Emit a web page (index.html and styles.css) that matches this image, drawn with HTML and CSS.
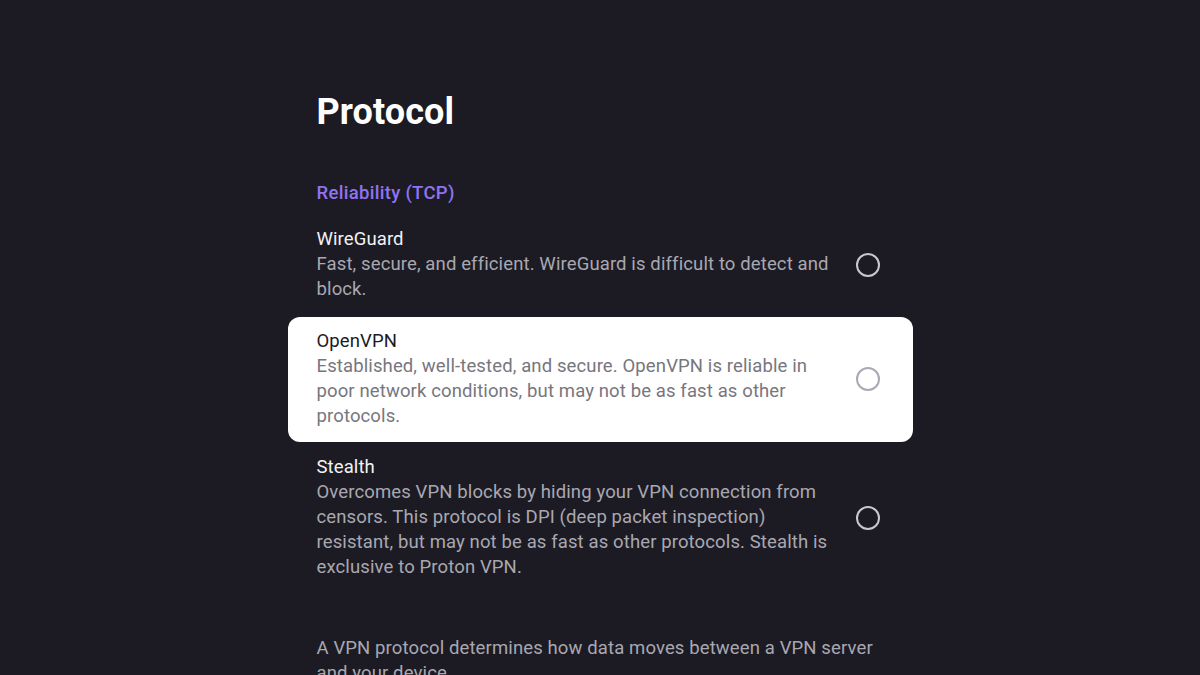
FILE: index.html
```html
<!DOCTYPE html>
<html>
<head>
<meta charset="utf-8">
<link rel="stylesheet" href="styles.css">
</head>
<body>
<div class="page">
  <h1 class="title">Protocol</h1>
  <div class="section">Reliability (TCP)</div>
  <div class="list">
    <div class="item">
      <div class="text">
        <div class="name">WireGuard</div>
        <div class="desc">Fast, secure, and efficient. WireGuard is difficult to detect and block.</div>
      </div>
      <span class="radio"></span>
    </div>
    <div class="item focused">
      <div class="text">
        <div class="name">OpenVPN</div>
        <div class="desc">Established, well-tested, and secure. OpenVPN is reliable in poor network conditions, but may not be as fast as other protocols.</div>
      </div>
      <span class="radio"></span>
    </div>
    <div class="item">
      <div class="text">
        <div class="name">Stealth</div>
        <div class="desc">Overcomes VPN blocks by hiding your VPN connection from censors. This protocol is DPI (deep packet inspection) resistant, but may not be as fast as other protocols. Stealth is exclusive to Proton VPN.</div>
      </div>
      <span class="radio"></span>
    </div>
  </div>
  <p class="footer">A VPN protocol determines how data moves between a VPN server and your device.</p>
</div>
</body>
</html>
```
FILE: styles.css
```css
html, body {
  margin: 0;
  padding: 0;
  background: #1c1b24;
  height: 100%;
  overflow: hidden;
}
body {
  font-family: Roboto, "Noto Sans", sans-serif;
}
.page {
  width: 625px;
  margin: 0 auto;
  padding-top: 90px;
}
.title {
  margin: 0 0 0 29px;
  font-size: 36px;
  line-height: 44px;
  font-weight: 700;
  color: #ffffff;
  letter-spacing: 0.1px;
}
.section {
  margin: 47px 0 0 29px;
  font-size: 18.5px;
  line-height: 25px;
  font-weight: 500;
  color: #8f73f2;
  letter-spacing: 0.3px;
}
.list {
  margin-top: 9px;
  display: flex;
  flex-direction: column;
  gap: 1.5px;
}
.item {
  display: flex;
  align-items: center;
  padding: 12px 33px 13px 29px;
  border-radius: 12px;
}
.text {
  flex: 1;
  max-width: 522px;
}
.name {
  font-size: 18.5px;
  line-height: 25px;
  color: #f2f2f5;
  letter-spacing: 0.1px;
}
.desc {
  font-size: 18.5px;
  line-height: 25px;
  color: #a9a8b1;
  letter-spacing: 0.12px;
}
.radio {
  margin-left: auto;
  width: 20px;
  height: 20px;
  border: 2px solid #c9c8d0;
  border-radius: 50%;
  flex: none;
}
.focused {
  background: #ffffff;
}
.focused .name {
  color: #1b1b1f;
}
.focused .desc {
  color: #77767e;
}
.focused .radio {
  border-color: #a9a8b4;
}
.footer {
  margin: 43px 0 0 29px;
  width: 565px;
  font-size: 18.5px;
  line-height: 25px;
  color: #a9a8b1;
  letter-spacing: 0.12px;
}
```
